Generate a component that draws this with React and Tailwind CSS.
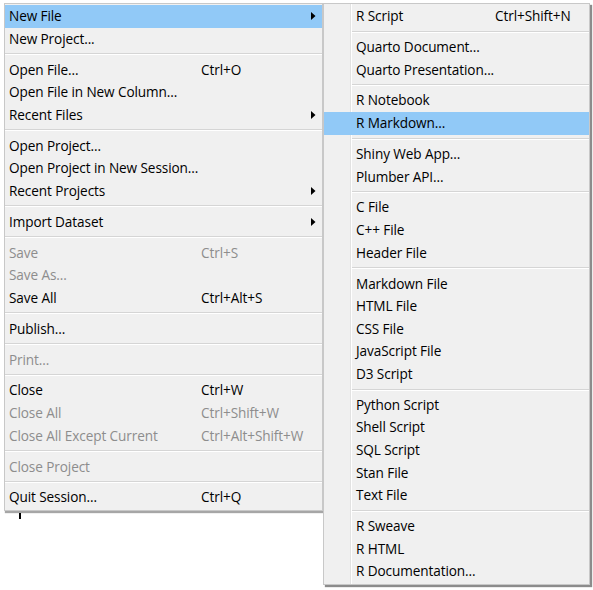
import React from "react";

// main File menu entries; "sep" draws a divider
const mainItems = [
  { label: "New File", arrow: true, active: true },
  { label: "New Project..." },
  "sep",
  { label: "Open File...", shortcut: "Ctrl+O" },
  { label: "Open File in New Column..." },
  { label: "Recent Files", arrow: true },
  "sep",
  { label: "Open Project..." },
  { label: "Open Project in New Session..." },
  { label: "Recent Projects", arrow: true },
  "sep",
  { label: "Import Dataset", arrow: true },
  "sep",
  { label: "Save", shortcut: "Ctrl+S", disabled: true },
  { label: "Save As...", disabled: true },
  { label: "Save All", shortcut: "Ctrl+Alt+S" },
  "sep",
  { label: "Publish..." },
  "sep",
  { label: "Print...", disabled: true },
  "sep",
  { label: "Close", shortcut: "Ctrl+W" },
  { label: "Close All", shortcut: "Ctrl+Shift+W", disabled: true },
  { label: "Close All Except Current", shortcut: "Ctrl+Alt+Shift+W", disabled: true },
  "sep",
  { label: "Close Project", disabled: true },
  "sep",
  { label: "Quit Session...", shortcut: "Ctrl+Q" },
];

const subItems = [
  { label: "R Script", shortcut: "Ctrl+Shift+N" },
  "sep",
  { label: "Quarto Document..." },
  { label: "Quarto Presentation..." },
  "sep",
  { label: "R Notebook" },
  { label: "R Markdown...", active: true },
  "sep",
  { label: "Shiny Web App..." },
  { label: "Plumber API..." },
  "sep",
  { label: "C File" },
  { label: "C++ File" },
  { label: "Header File" },
  "sep",
  { label: "Markdown File" },
  { label: "HTML File" },
  { label: "CSS File" },
  { label: "JavaScript File" },
  { label: "D3 Script" },
  "sep",
  { label: "Python Script" },
  { label: "Shell Script" },
  { label: "SQL Script" },
  { label: "Stan File" },
  { label: "Text File" },
  "sep",
  { label: "R Sweave" },
  { label: "R HTML" },
  { label: "R Documentation..." },
];

function Separator({ inset }) {
  return (
    <div className={`h-[8.3px] flex flex-col justify-center ${inset ? "pl-[28px]" : ""}`}>
      <div className="h-px bg-[#d5d5d5]" />
      <div className="h-px bg-white" />
    </div>
  );
}

function Arrow() {
  return (
    <svg width="5" height="8" viewBox="0 0 5 8" className="mr-[6px]">
      <path d="M0 0 L4.5 4 L0 8 Z" fill="#000" />
    </svg>
  );
}

function MainRow({ item }) {
  return (
    <div
      className={`h-[22.6px] flex items-center pl-[4px] ${
        item.active ? "bg-[#91c9f7]" : ""
      } ${item.disabled ? "text-[#8d8d8d]" : "text-black"}`}
    >
      <span className="w-[192px] whitespace-nowrap">{item.label}</span>
      <span className="flex-1 whitespace-nowrap">{item.shortcut}</span>
      {item.arrow && <Arrow />}
    </div>
  );
}

function SubRow({ item }) {
  return (
    <div
      className={`relative h-[22.6px] flex items-center pl-[32px] ${
        item.active ? "bg-[#91c9f7]" : ""
      }`}
    >
      <span className="w-[139px] whitespace-nowrap">{item.label}</span>
      <span className="whitespace-nowrap">{item.shortcut}</span>
    </div>
  );
}

export default function App() {
  return (
    <div
      className="w-[593px] h-[590px] bg-white flex items-start pt-[3px] pl-[4px] text-[13.6px] tracking-[-0.1px] overflow-hidden"
      style={{ fontFamily: '"Open Sans", "Noto Sans", sans-serif' }}
    >
      <div className="flex flex-col">
        <div className="w-[319px] bg-[#f0f0f0] border border-[#c8c8c8] shadow-[1px_2px_1px_rgba(0,0,0,0.35)] py-px">
          {mainItems.map((it, i) =>
            it === "sep" ? <Separator key={i} /> : <MainRow key={i} item={it} />
          )}
        </div>
        <div className="ml-[15px] mt-[2px] w-[2px] h-[6px] bg-black" />
      </div>

      <div className="relative w-[267px] bg-[#f0f0f0] border border-[#c8c8c8] shadow-[2px_2px_1px_rgba(0,0,0,0.45)] py-px">
        {/* icon gutter line */}
        <div className="absolute top-0 bottom-0 left-[26px] w-[2px] flex">
          <div className="w-px bg-[#e2e2e2]" />
          <div className="w-px bg-white" />
        </div>
        {subItems.map((it, i) =>
          it === "sep" ? <Separator key={i} inset /> : <SubRow key={i} item={it} />
        )}
      </div>
    </div>
  );
}
